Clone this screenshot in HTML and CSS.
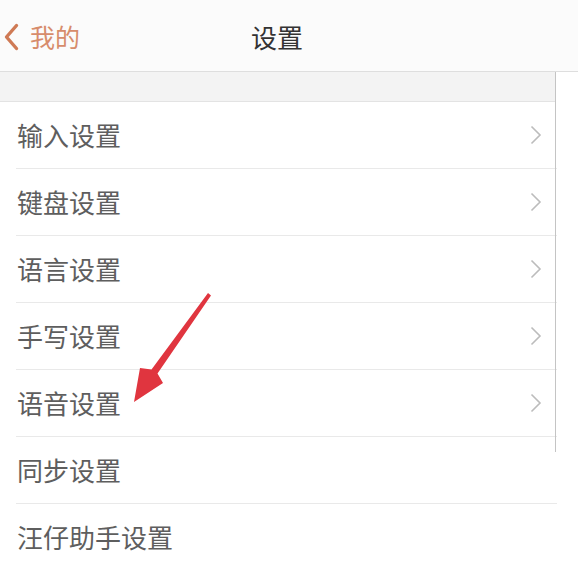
FILE: index.html
```html
<!DOCTYPE html>
<html lang="zh">
<head>
<meta charset="utf-8">
<title>设置</title>
<link rel="stylesheet" href="styles.css">
</head>
<body>
<div class="page">
  <header class="nav">
    <div class="back">
      <svg class="back-icon" width="16" height="28" viewBox="0 0 16 28"><path d="M13.5 2.5 L3.5 14 L13.5 25.5" fill="none" stroke="#cf7a55" stroke-width="3.4" stroke-linecap="round" stroke-linejoin="round"/></svg>
      <span class="back-text">我的</span>
    </div>
    <div class="title">设置</div>
    <div class="spacer"></div>
  </header>
  <div class="band"></div>
  <ul class="list">
    <li class="row"><div class="inner"><span class="label">输入设置</span><svg class="chev" width="12" height="20" viewBox="0 0 12 20"><path d="M1.5 1.5 L10 10 L1.5 18.5" fill="none" stroke="#bcbcbc" stroke-width="1.6"/></svg></div></li>
    <li class="row"><div class="inner"><span class="label">键盘设置</span><svg class="chev" width="12" height="20" viewBox="0 0 12 20"><path d="M1.5 1.5 L10 10 L1.5 18.5" fill="none" stroke="#bcbcbc" stroke-width="1.6"/></svg></div></li>
    <li class="row"><div class="inner"><span class="label">语言设置</span><svg class="chev" width="12" height="20" viewBox="0 0 12 20"><path d="M1.5 1.5 L10 10 L1.5 18.5" fill="none" stroke="#bcbcbc" stroke-width="1.6"/></svg></div></li>
    <li class="row"><div class="inner"><span class="label">手写设置</span><svg class="chev" width="12" height="20" viewBox="0 0 12 20"><path d="M1.5 1.5 L10 10 L1.5 18.5" fill="none" stroke="#bcbcbc" stroke-width="1.6"/></svg></div></li>
    <li class="row"><div class="inner"><span class="label">语音设置</span><svg class="chev" width="12" height="20" viewBox="0 0 12 20"><path d="M1.5 1.5 L10 10 L1.5 18.5" fill="none" stroke="#bcbcbc" stroke-width="1.6"/></svg></div></li>
    <li class="row"><div class="inner"><span class="label">同步设置</span></div></li>
    <li class="row last"><div class="inner"><span class="label">汪仔助手设置</span></div></li>
  </ul>
  <div class="vline"></div>
  <svg class="arrow" width="578" height="572" viewBox="0 0 578 572">
    <polygon points="208,293 211,295.5 157.5,373.5 163,383 134,402 140,368 151.5,369.5" fill="#e0353f"/>
  </svg>
</div>
</body>
</html>
```

FILE: styles.css
```css
html, body {
  margin: 0;
  padding: 0;
  background: #ffffff;
}
body {
  font-family: "Noto Sans CJK SC", "Noto Sans", sans-serif;
}
.page {
  position: relative;
  width: 578px;
  height: 572px;
  overflow: hidden;
  background: #ffffff;
}
.nav {
  height: 71px;
  border-bottom: 1px solid #dedede;
  background: #fbfbfb;
  display: grid;
  grid-template-columns: 1fr auto 1fr;
  align-items: center;
}
.back {
  display: flex;
  align-items: center;
  padding-left: 3px;
  gap: 11px;
  margin-top: 2px;
}
.back-icon {
  display: block;
}
.back-text {
  font-size: 25px;
  color: #d78c6b;
  line-height: 1;
}
.title {
  font-size: 26px;
  color: #333333;
  line-height: 1;
  margin-top: 2px;
  margin-right: 24px;
}
.band {
  width: 556px;
  height: 29px;
  background: #f3f3f3;
  border-bottom: 1px solid #e3e3e3;
}
.list {
  list-style: none;
  margin: 0;
  padding: 0;
}
.row {
  height: 67px;
}
.inner {
  margin-left: 16px;
  width: 541px;
  height: 66px;
  border-bottom: 1px solid #e9e9e9;
  display: flex;
  align-items: center;
  justify-content: space-between;
}
.last .inner {
  border-bottom: none;
}
.label {
  font-size: 26px;
  color: #5e5e5e;
  line-height: 1;
  padding-left: 1px;
}
.chev {
  display: block;
  margin-right: 15px;
}
.vline {
  position: absolute;
  left: 555px;
  top: 72px;
  width: 1px;
  height: 380px;
  background: #c4c4c4;
}
.arrow {
  position: absolute;
  left: 0;
  top: 0;
  pointer-events: none;
}
```
